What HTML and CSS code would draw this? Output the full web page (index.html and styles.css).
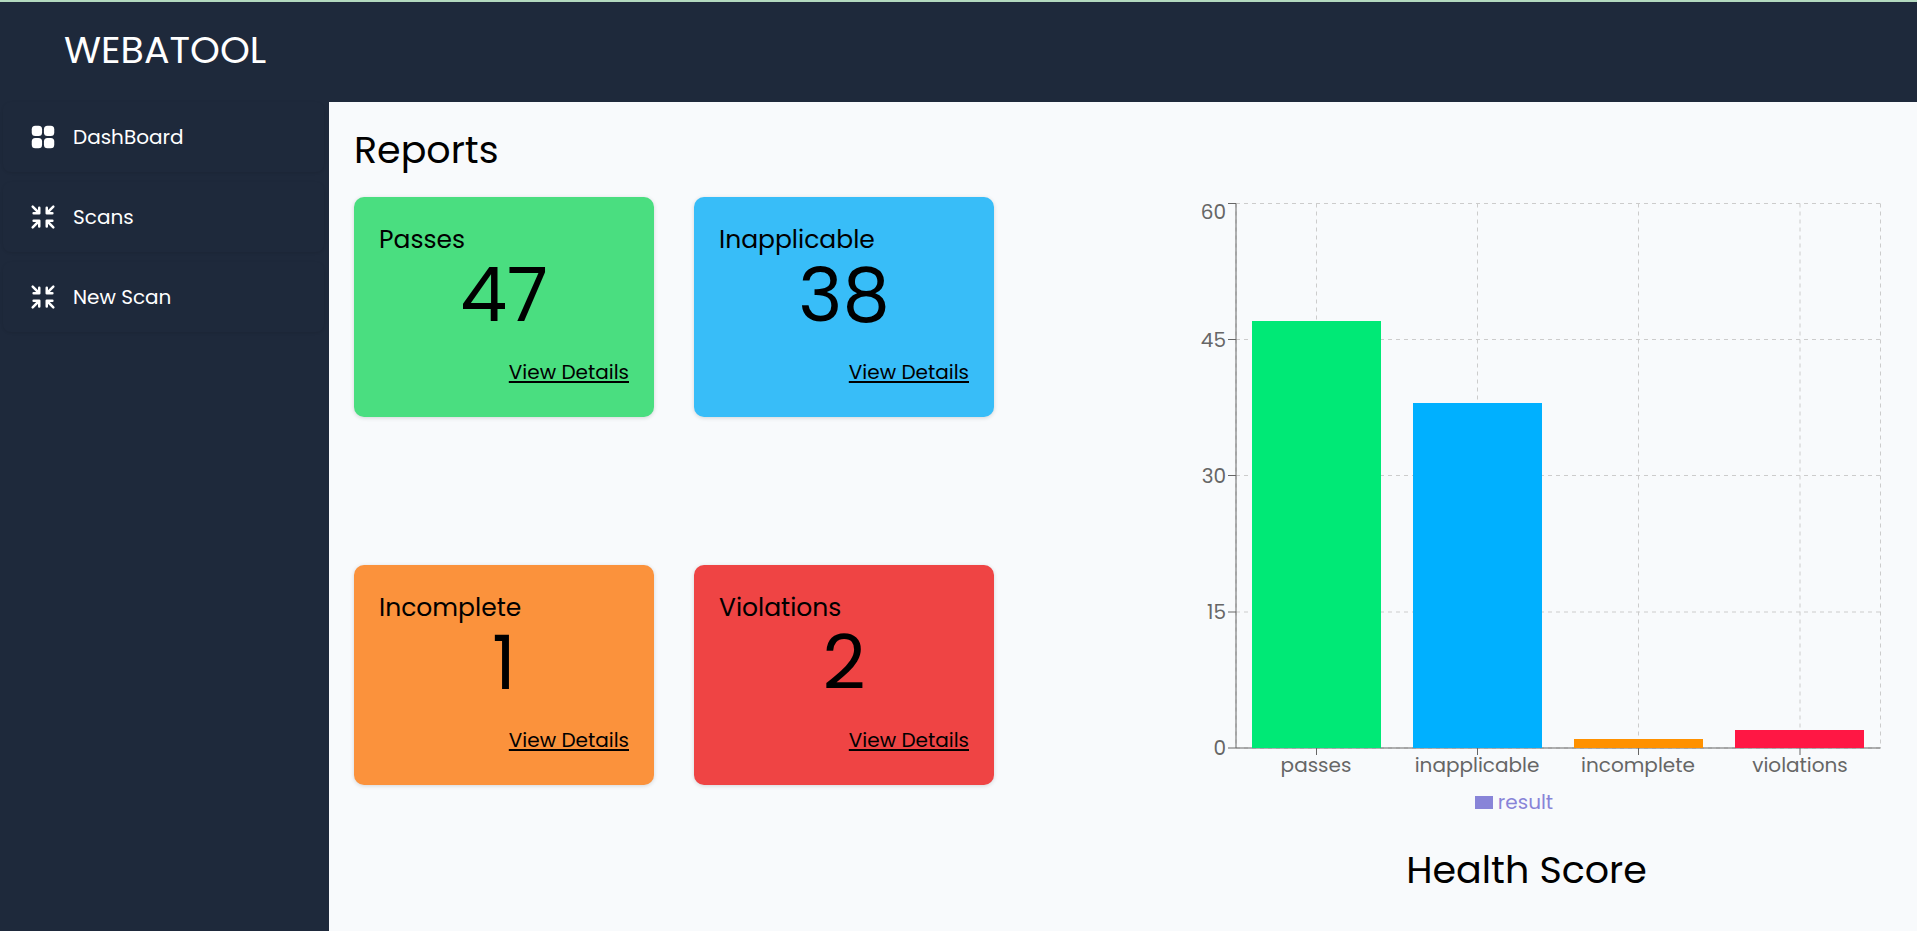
FILE: index.html
```html
<!DOCTYPE html>
<html lang="en">
<head>
<meta charset="utf-8">
<title>Webatool</title>
<link rel="stylesheet" href="styles.css">
</head>
<body>
<header class="topbar"><p class="brand">WEBATOOL</p></header>
<div class="shell">
  <nav class="sidebar" aria-label="Main">
    <a class="nav-item" href="#dashboard">
      <svg class="nav-icon" viewBox="0 0 24 24" fill="currentColor" aria-hidden="true"><rect x="3" y="3" width="8.25" height="8.25" rx="2.8"/><rect x="12.75" y="3" width="8.25" height="8.25" rx="2.8"/><rect x="3" y="12.75" width="8.25" height="8.25" rx="2.8"/><rect x="12.75" y="12.75" width="8.25" height="8.25" rx="2.8"/></svg>
      DashBoard
    </a>
    <a class="nav-item" href="#scans">
      <svg class="nav-icon nav-icon-line" viewBox="0 0 24 24" aria-hidden="true"><path d="M9 9V4.5M9 9H4.5M9 9 3.75 3.75M9 15v4.5M9 15H4.5M9 15l-5.25 5.25M15 9h4.5M15 9V4.5M15 9l5.25-5.25M15 15h4.5M15 15v4.5m0-4.5 5.25 5.25"/></svg>
      Scans
    </a>
    <a class="nav-item" href="#new-scan">
      <svg class="nav-icon nav-icon-line" viewBox="0 0 24 24" aria-hidden="true"><path d="M9 9V4.5M9 9H4.5M9 9 3.75 3.75M9 15v4.5M9 15H4.5M9 15l-5.25 5.25M15 9h4.5M15 9V4.5M15 9l5.25-5.25M15 15h4.5M15 15v4.5m0-4.5 5.25 5.25"/></svg>
      New Scan
    </a>
  </nav>
  <main class="content">
    <h1 class="heading">Reports</h1>
    <div class="report">
      <div class="cards">
        <section class="card card-passes"><h2 class="card-title">Passes</h2><p class="card-count">47</p><a class="card-link" href="#passes">View Details</a></section>
        <section class="card card-inapplicable"><h2 class="card-title">Inapplicable</h2><p class="card-count">38</p><a class="card-link" href="#inapplicable">View Details</a></section>
        <section class="card card-incomplete"><h2 class="card-title">Incomplete</h2><p class="card-count">1</p><a class="card-link" href="#incomplete">View Details</a></section>
        <section class="card card-violations"><h2 class="card-title">Violations</h2><p class="card-count">2</p><a class="card-link" href="#violations">View Details</a></section>
      </div>
      <section class="score">
        <svg class="chart" viewBox="0 0 781 590" role="img" aria-label="Results by category">
          <g class="grid-lines">
            <path d="M100 6.5H744.5M100 142.5H744.5M100 278.5H744.5M100 415H744.5M100 551H744.5"/>
            <path d="M180.5 6.5V551M341.5 6.5V551M502.5 6.5V551M664 6.5V551M744.5 6.5V551M100 6.5V551"/>
          </g>
          <path class="axis" d="M100 6.5V551M92 551H744.5M92 6.5h8M92 142.5h8M92 278.5h8M92 415h8M180.5 551v7M341.5 551v7M502.5 551v7M664 551v7"/>
          <rect x="116" y="124" width="129" height="427" fill="#00e976"/>
          <rect x="277" y="206" width="129" height="345" fill="#00b0ff"/>
          <rect x="438" y="542" width="129" height="9" fill="#ff9100"/>
          <rect x="599" y="533" width="129" height="18" fill="#ff1744"/>
          <g class="tick tick-y"><text x="90" y="22">60</text><text x="90" y="150">45</text><text x="90" y="286">30</text><text x="90" y="422">15</text><text x="90" y="558">0</text></g>
          <g class="tick tick-x"><text x="180" y="575">passes</text><text x="341" y="575">inapplicable</text><text x="502" y="575">incomplete</text><text x="664" y="575">violations</text></g>
        </svg>
        <p class="legend"><span class="legend-mark"></span>result</p>
        <h2 class="heading score-title">Health Score</h2>
      </section>
    </div>
  </main>
</div>
</body>
</html>
```

FILE: styles.css
```css
* { box-sizing: border-box; margin: 0; }
body {
  min-height: 100vh;
  display: flex;
  flex-direction: column;
  font-family: Poppins, Inter, "Liberation Sans", sans-serif;
  font-size: 20px;
  line-height: 30px;
  color: #000;
  background: #f8fafc;
}
.topbar {
  height: 102px;
  display: flex;
  align-items: center;
  padding: 0 64px 6px;
  border-top: 2px solid #b3d9bf;
  background: #1e293b;
  color: #fff;
}
.brand { font-size: 38px; line-height: 45px; }
.shell { flex: 1; display: flex; }
.sidebar {
  flex: none;
  width: 329px;
  display: flex;
  flex-direction: column;
  gap: 10px;
  padding: 0 5px 0 3px;
  background: #1e293b;
}
.nav-item {
  height: 70px;
  display: flex;
  align-items: center;
  gap: 15px;
  padding: 0 25px;
  border-radius: 8px;
  box-shadow: 0 1px 3px rgba(0, 0, 0, 0.1);
  color: #fff;
  text-decoration: none;
}
.nav-icon { width: 30px; height: 30px; }
.nav-icon-line { fill: none; stroke: currentColor; stroke-width: 2; stroke-linecap: round; stroke-linejoin: round; }
.content { flex: 1; padding: 25px 0 25px 25px; }
.heading { font-size: 38px; line-height: 45px; font-weight: 400; }
.report { display: flex; justify-content: space-between; margin-top: 25px; }
.cards {
  display: grid;
  grid-template-columns: 300px 300px;
  gap: 40px;
  align-items: start;
}
.card {
  height: 220px;
  display: flex;
  flex-direction: column;
  padding: 25px;
  border-radius: 10px;
  box-shadow: 0 1px 4px rgba(0, 0, 0, 0.15);
}
.card-passes { background: #4ade80; }
.card-inapplicable { background: #38bdf8; }
.card-incomplete { background: #fb923c; }
.card-violations { background: #ef4444; }
.card-title { font-size: 25px; line-height: 35px; font-weight: 400; }
.card-count { font-size: 75px; line-height: 75px; text-align: center; }
.card-link {
  align-self: flex-end;
  margin-top: 25px;
  color: inherit;
  text-decoration: underline 2px;
  text-underline-offset: 2px;
}
.score { width: 50%; max-width: 781px; }
.chart { display: block; width: 100%; }
.grid-lines { fill: none; stroke: #ccc; stroke-dasharray: 4 4; }
.axis { fill: none; stroke: #666; }
.tick { fill: #666; font-size: 20px; }
.tick-y { text-anchor: end; }
.tick-x { text-anchor: middle; }
.legend {
  display: flex;
  align-items: center;
  justify-content: center;
  gap: 5px;
  padding-right: 25px;
  color: #8884d8;
}
.legend-mark { width: 18px; height: 13px; background: #8884d8; }
.score-title { margin-top: 30px; text-align: center; }
```
